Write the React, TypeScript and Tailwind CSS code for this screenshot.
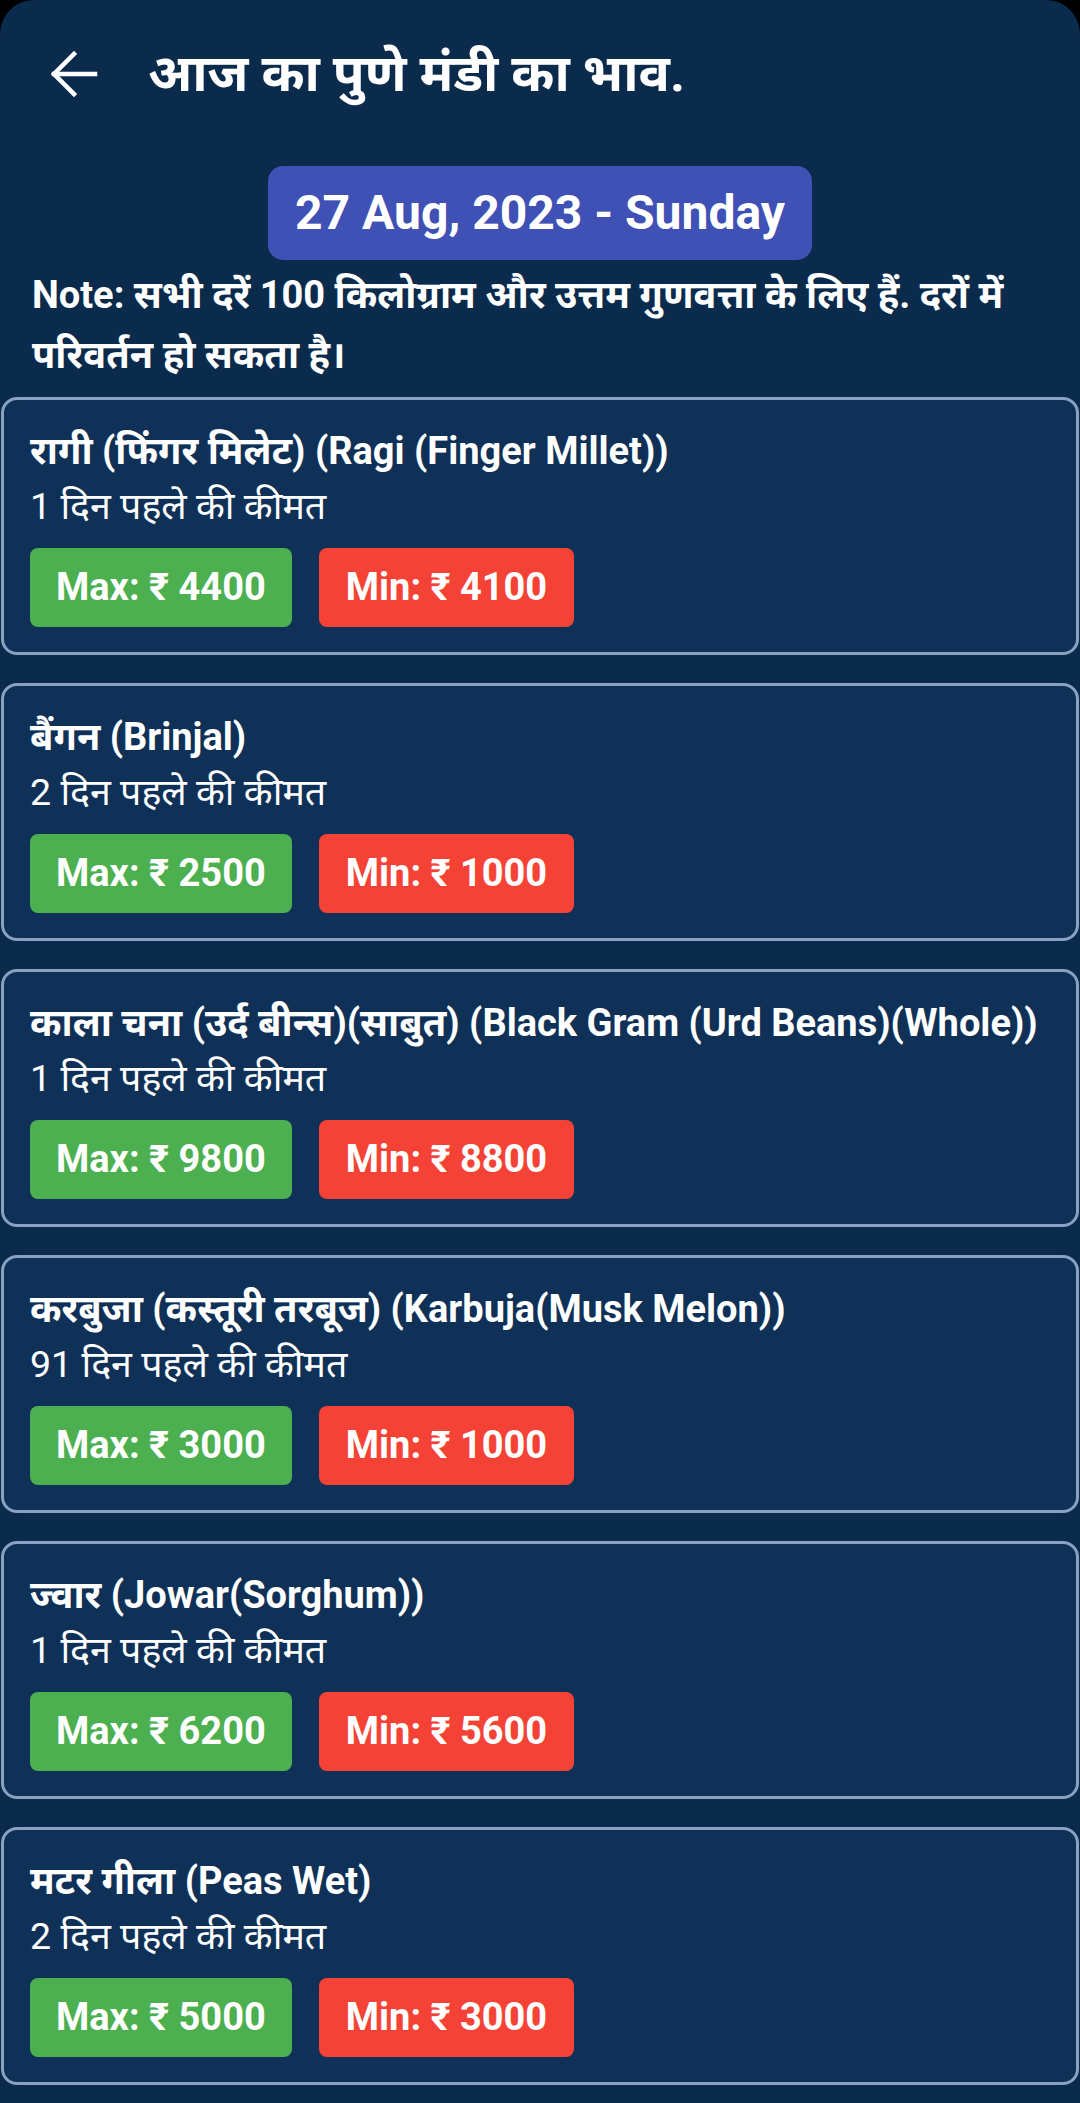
import React from 'react';

interface Crop {
  id: string;
  name: string;
  age: string;
  max: number;
  min: number;
}

const crops: Crop[] = [
  { id: 'ragi', name: 'रागी (फिंगर मिलेट) (Ragi (Finger Millet))', age: '1 दिन पहले की कीमत', max: 4400, min: 4100 },
  { id: 'brinjal', name: 'बैंगन (Brinjal)', age: '2 दिन पहले की कीमत', max: 2500, min: 1000 },
  { id: 'urd', name: 'काला चना (उर्द बीन्स)(साबुत) (Black Gram (Urd Beans)(Whole))', age: '1 दिन पहले की कीमत', max: 9800, min: 8800 },
  { id: 'karbuja', name: 'करबुजा (कस्तूरी तरबूज) (Karbuja(Musk Melon))', age: '91 दिन पहले की कीमत', max: 3000, min: 1000 },
  { id: 'jowar', name: 'ज्वार (Jowar(Sorghum))', age: '1 दिन पहले की कीमत', max: 6200, min: 5600 },
  { id: 'peas', name: 'मटर गीला (Peas Wet)', age: '2 दिन पहले की कीमत', max: 5000, min: 3000 },
];

function BackArrow() {
  return (
    <svg width="48" height="48" viewBox="0 0 48 48" fill="none" stroke="white" strokeWidth="4.5" strokeLinecap="square">
      <path d="M4 24H45" />
      <path d="M24 4L4 24L24 44" />
    </svg>
  );
}

function PriceCard({ crop }: { crop: Crop }) {
  return (
    <div className="rounded-[16px] border-[3px] border-[#8aa1c2] bg-[#0f3157] pl-[26px] pr-2 pt-[24px] pb-[25px]">
      <div className="text-[38px] font-bold leading-[55px] text-white whitespace-nowrap">{crop.name}</div>
      <div className="text-[37.5px] leading-[55px] text-white">{crop.age}</div>
      <div className="mt-[14px] flex gap-[27px]">
        <div className="flex h-[79px] items-center rounded-[8px] bg-[#4caf50] px-[26px] text-[38px] font-bold text-white">
          Max: ₹ {crop.max}
        </div>
        <div className="flex h-[79px] items-center rounded-[8px] bg-[#f44336] px-[27px] text-[38px] font-bold text-white">
          Min: ₹ {crop.min}
        </div>
      </div>
    </div>
  );
}

export default function App() {
  return (
    <div className="h-[2103px] w-[1080px] overflow-hidden bg-black" style={{ fontFamily: 'Roboto, "Noto Sans", sans-serif' }}>
      <div className="h-full rounded-t-[34px] bg-[#0b2b4d]">
        {/* Top bar */}
        <div className="flex h-[44px] items-center pt-[52px] pl-[50px] box-content">
          <BackArrow />
          <h1 className="ml-[50px] text-[52px] font-bold leading-none text-white">आज का पुणे मंडी का भाव.</h1>
        </div>

        {/* Date */}
        <div className="mt-[70px] flex justify-center">
          <div className="flex h-[94px] items-center rounded-[15px] bg-[#3f51b5] px-[27px] text-[48px] font-bold text-white">
            27 Aug, 2023 - Sunday
          </div>
        </div>

        <p className="mt-[5px] pl-8 pr-6 text-[38px] font-bold leading-[60px] text-white">
          Note: सभी दरें 100 किलोग्राम और उत्तम गुणवत्ता के लिए हैं. दरों में परिवर्तन हो सकता है।
        </p>

        {/* Price list */}
        <div className="mx-px mt-[12px] flex flex-col gap-[28px]">
          {crops.map((c) => (
            <PriceCard key={c.id} crop={c} />
          ))}
        </div>
      </div>
    </div>
  );
}
